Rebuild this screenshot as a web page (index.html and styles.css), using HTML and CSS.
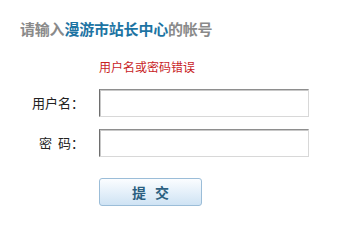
FILE: index.html
```html
<!DOCTYPE html>
<html>
<head>
<meta charset="utf-8">
<link rel="stylesheet" href="styles.css">
</head>
<body>
<div class="page">
  <h1 class="title">请输入<span class="site">漫游市站长中心</span>的帐号</h1>
  <p class="error">用户名或密码错误</p>
  <form class="form">
    <div class="row">
      <label class="label">用户名：</label>
      <input class="field" type="text">
    </div>
    <div class="row">
      <label class="label">密<span class="gap"></span>码：</label>
      <input class="field" type="password">
    </div>
    <div class="row actions">
      <span></span>
      <button class="submit" type="button">提<span class="btn-gap"></span>交</button>
    </div>
  </form>
</div>
</body>
</html>
```

FILE: styles.css
```css
html, body {
  margin: 0;
  padding: 0;
  background: #ffffff;
}
body {
  font-family: "Noto Sans CJK SC", "Noto Sans", sans-serif;
  width: 357px;
  height: 227px;
  overflow: hidden;
}
.page {
  padding-top: 19px;
}
.title {
  margin: 0;
  padding-left: 20px;
  font-size: 15px;
  line-height: 20px;
  font-weight: bold;
  color: #8a8a8a;
  letter-spacing: -0.2px;
}
.site {
  color: #1d74a3;
}
.error {
  margin: 20px 0 0 0;
  padding-left: 99px;
  font-size: 12px;
  line-height: 16px;
  color: #c8231f;
}
.form {
  margin: 14px 0 0 0;
  display: flex;
  flex-direction: column;
  gap: 12px;
}
.row {
  display: grid;
  grid-template-columns: 84px 210px;
  column-gap: 15px;
  align-items: center;
}
.label {
  text-align: right;
  font-size: 13px;
  line-height: 16px;
  color: #222;
}
.gap {
  display: inline-block;
  width: 6px;
}
.field {
  box-sizing: border-box;
  width: 210px;
  height: 28px;
  margin: 0;
  padding: 0 4px;
  border: 1px solid;
  border-color: #8e8e8e #d8d8d8 #d8d8d8 #6e6e6e;
  box-shadow: inset 1px 1px 0 #c8c8c8;
  background: #fff;
  outline: none;
}
.actions {
  margin-top: 9px;
}
.submit {
  box-sizing: border-box;
  width: 103px;
  height: 28px;
  margin: 0;
  padding: 0;
  border: 1px solid #9bbdd8;
  border-radius: 3px;
  background: linear-gradient(#fbfdff, #cfe3f4);
  color: #2b5f80;
  font-family: "Noto Sans CJK SC", sans-serif;
  font-size: 14px;
  font-weight: bold;
  line-height: 26px;
}
.btn-gap {
  display: inline-block;
  width: 9px;
}
```
